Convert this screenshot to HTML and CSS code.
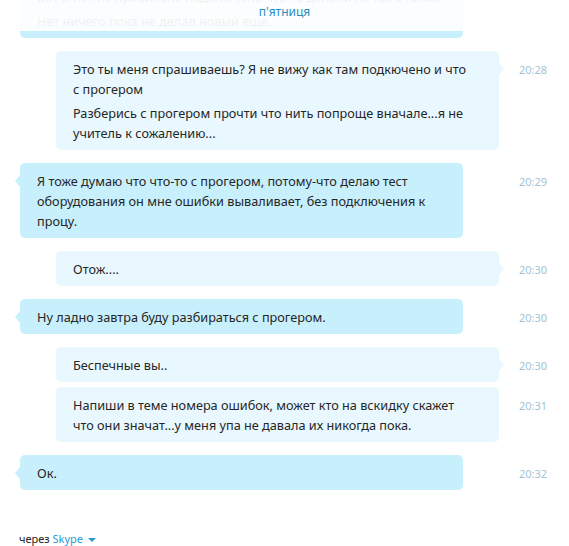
FILE: index.html
```html
<!DOCTYPE html>
<html lang="ru">
<head>
    <meta charset="UTF-8">
    <meta name="viewport" content="width=device-width, initial-scale=1.0">
    <title>Чат</title>
    <link rel="stylesheet" href="styles.css">
</head>
<body>
    <div class="chat">
        <!-- Day divider over the faded older messages -->
        <div class="day-label"><span>п'ятниця</span></div>

        <div class="history">
            <div class="row row-in">
                <div class="bubble">
                    <p>Вот и нет не правильно подключено что-то делали не так с ним...</p>
                    <p>Нет ничего пока не делал новый еще.</p>
                </div>
            </div>

            <div class="row row-out">
                <div class="bubble">
                    <p>Это ты меня спрашиваешь? Я не вижу как там подкючено и что<br>с прогером</p>
                    <p>Разберись с прогером прочти что нить попроще вначале...я не<br>учитель к сожалению...</p>
                </div>
                <div class="time">20:28</div>
            </div>

            <div class="row row-in">
                <div class="bubble">
                    <p>Я тоже думаю что что-то с прогером, потому-что делаю тест<br>оборудования он мне ошибки вываливает, без подключения к<br>процу.</p>
                </div>
                <div class="time">20:29</div>
            </div>

            <div class="row row-out">
                <div class="bubble">
                    <p>Отож....</p>
                </div>
                <div class="time">20:30</div>
            </div>

            <div class="row row-in">
                <div class="bubble">
                    <p>Ну ладно завтра буду разбираться с прогером.</p>
                </div>
                <div class="time">20:30</div>
            </div>

            <div class="row row-out">
                <div class="bubble">
                    <p>Беспечные вы..</p>
                </div>
                <div class="time">20:30</div>
            </div>

            <div class="row row-out same">
                <div class="bubble no-tail">
                    <p>Напиши в теме номера ошибок, может кто на вскидку скажет<br>что они значат...у меня упа не давала их никогда пока.</p>
                </div>
                <div class="time">20:31</div>
            </div>

            <div class="row row-in">
                <div class="bubble">
                    <p>Ок.</p>
                </div>
                <div class="time">20:32</div>
            </div>
        </div>

        <div class="via">
            через <a href="#">Skype</a>
            <span class="caret"></span>
        </div>
    </div>
</body>
</html>
```

FILE: styles.css
```css
body {
    margin: 0;
    background: #ffffff;
    font-family: 'Noto Sans', 'Open Sans', sans-serif;
    font-size: 12.7px;
    color: #262626;
    overflow: hidden;
}

.chat {
    position: relative; /* for the day label overlay */
    width: 569px;
    height: 546px;
    overflow: hidden;
}

/* white veil that fades the older messages at the top */
.day-label {
    position: absolute;
    top: 0;
    left: 0;
    right: 0;
    height: 31px;
    background: rgba(255, 255, 255, 0.93);
    text-align: center;
    z-index: 2;
}

.day-label span {
    display: inline-block;
    margin-top: 3px;
    line-height: 18px;
    color: #2a8cc2;
    font-size: 12px;
}

.history {
    margin-top: -21px;
}

.row {
    display: flex;
    align-items: flex-start;
    margin-top: 13px;
}

.row:first-child {
    margin-top: 0;
}

.row.same {
    margin-top: 5px;
}

.bubble {
    position: relative;
    width: 409px;
    padding: 8px 17px 7px;
    border-radius: 5px;
}

.bubble p {
    margin: 0;
    line-height: 20px;
}

.bubble p + p {
    margin-top: 4px;
}

.row-in .bubble {
    margin-left: 20px;
    background: #c8effc;
}

.row-out .bubble {
    margin-left: 56px;
    background: #e9f8fe;
}

/* little tails pointing at the speaker */
.bubble::before {
    content: '';
    position: absolute;
    top: 12px;
    border-top: 6px solid transparent;
    border-bottom: 6px solid transparent;
}

.row-in .bubble::before {
    left: -5px;
    border-right: 5px solid #c8effc;
}

.row-out .bubble::before {
    right: -5px;
    border-left: 5px solid #e9f8fe;
}

.bubble.no-tail::before {
    display: none;
}

.time {
    margin-left: auto;
    width: 50px;
    padding-top: 9px;
    line-height: 20px;
    font-size: 11px;
    color: #a3c3d4;
}

.via {
    margin: 42px 0 0 19px;
    font-size: 11px;
    color: #262626;
    line-height: 14px;
}

.via a {
    color: #2a9ad6;
    text-decoration: none;
}

.caret {
    display: inline-block;
    margin-left: 2px;
    vertical-align: middle;
    border-left: 4px solid transparent;
    border-right: 4px solid transparent;
    border-top: 4px solid #2a9ad6;
}
```
